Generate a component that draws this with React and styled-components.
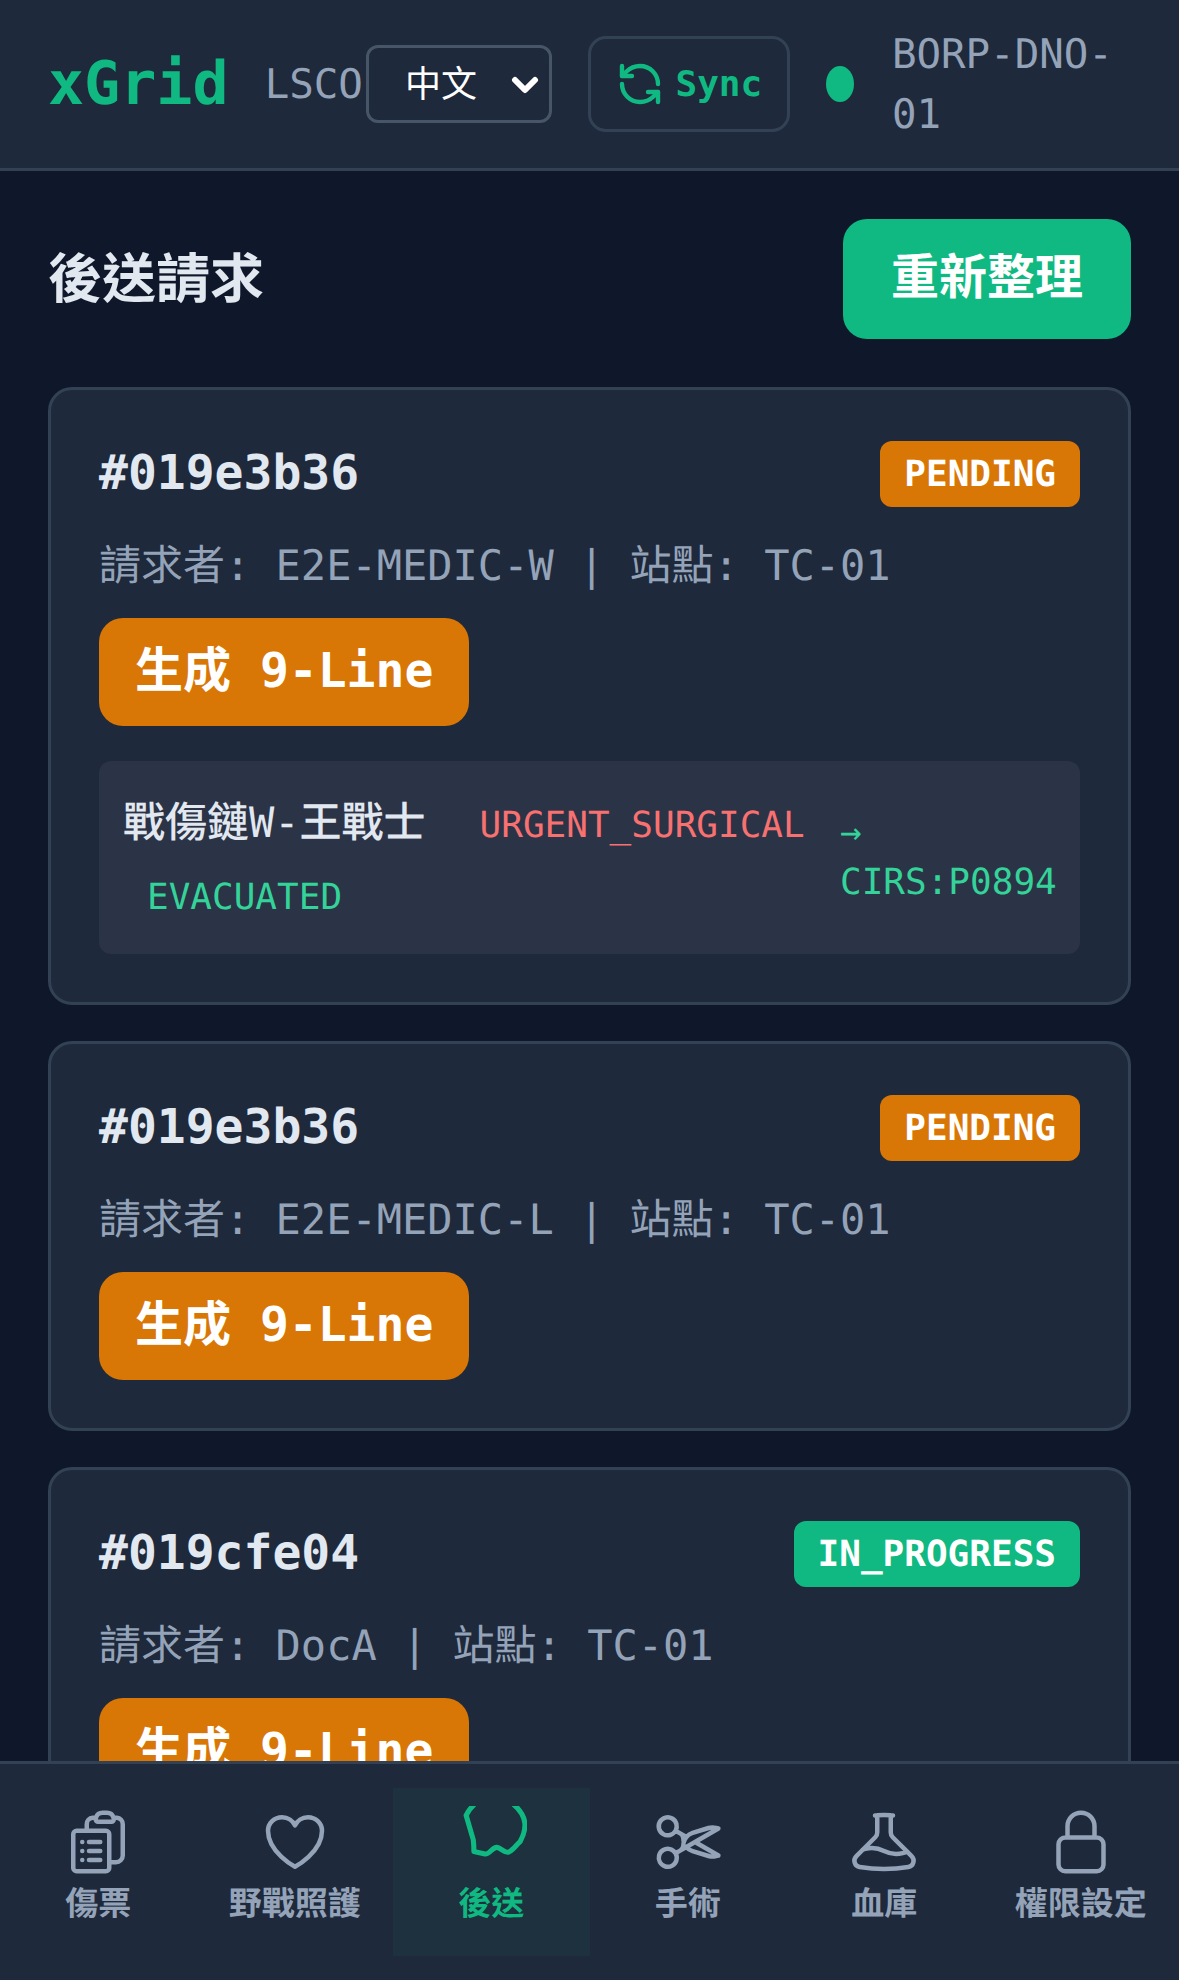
import React from 'react'
import styled, { createGlobalStyle } from 'styled-components'
import { RefreshCcw } from 'lucide-react'
import {
  HiOutlineClipboardDocumentList,
  HiOutlineHeart,
  HiOutlineScissors,
  HiOutlineBeaker,
  HiOutlineLockClosed,
} from 'react-icons/hi2'

const GlobalStyle = createGlobalStyle`
  * { box-sizing: border-box; }
  html, body { margin: 0; padding: 0; height: 100%; background: #0f172a; }
  body {
    font-family: "DejaVu Sans Mono", "Noto Sans CJK TC", monospace;
    text-rendering: geometricPrecision;
  }
`

const Page = styled.div`
  height: 1980px;
  display: flex;
  flex-direction: column;
  overflow: hidden;
  background: #0f172a;
`

const Header = styled.header`
  height: 171px;
  flex-shrink: 0;
  display: flex;
  align-items: center;
  padding: 0 48px;
  background: #1e293b;
  border-bottom: 3px solid #334155;
`

const Logo = styled.div`
  font-size: 60px;
  font-weight: 700;
  color: #10b981;
  margin-right: 36px;
`

const Station = styled.div`
  font-size: 40.8px;
  color: #94a3b8;
  margin-right: 3px;
`

const SelectWrap = styled.div`
  position: relative;
  flex-shrink: 0;
  margin-right: 36px;
`

const LangSelect = styled.select`
  display: block;
  appearance: none;
  width: 186px;
  height: 78px;
  padding: 0 36px;
  font-family: inherit;
  font-size: 36px;
  color: #fff;
  background: #1e293b;
  border: 3px solid #475569;
  border-radius: 12px;
`

const Chevron = styled.svg`
  position: absolute;
  right: 13px;
  top: 30px;
  pointer-events: none;
`

const SyncButton = styled.button`
  width: 202px;
  height: 96px;
  flex-shrink: 0;
  display: flex;
  align-items: center;
  justify-content: center;
  gap: 12px;
  padding-bottom: 2px;
  font-family: inherit;
  font-size: 36px;
  font-weight: 700;
  color: #10b981;
  background: transparent;
  border: 3px solid #334155;
  border-radius: 18px;
  margin-right: 36px;
`

const Dot = styled.span`
  width: 28px;
  height: 36px;
  flex-shrink: 0;
  border-radius: 50%;
  background: #10b981;
  margin-right: 38px;
`

const NodeName = styled.div`
  width: 239px;
  font-size: 40.8px;
  line-height: 60px;
  color: #94a3b8;
`

const Main = styled.main`
  flex: 1;
  min-height: 0;
  overflow: hidden;
  padding: 48px 48px 0;
`

const TitleRow = styled.div`
  display: flex;
  align-items: center;
  justify-content: space-between;
  margin-bottom: 48px;
`

const Title = styled.h1`
  margin: 0;
  padding-bottom: 10px;
  font-size: 54px;
  font-weight: 700;
  color: #e2e8f0;
`

const RefreshButton = styled.button`
  width: 288px;
  height: 120px;
  padding: 0 0 12px;
  font-family: inherit;
  font-size: 48px;
  font-weight: 700;
  color: #fff;
  background: #10b981;
  border: none;
  border-radius: 24px;
`

const Card = styled.section`
  padding: 51px 48px 48px;
  margin-bottom: 36px;
  background: #1e293b;
  border: 3px solid #334155;
  border-radius: 24px;
`

const CardTop = styled.div`
  display: flex;
  align-items: center;
  justify-content: space-between;
  height: 66px;
`

const RequestId = styled.div`
  padding-bottom: 2px;
  font-size: 48px;
  font-weight: 700;
  color: #e2e8f0;
`

const Badge = styled.span`
  height: 66px;
  display: flex;
  align-items: center;
  padding: 0 24px;
  font-size: 36px;
  font-weight: 700;
  color: #fff;
  background: ${({ $status }) => ($status === 'PENDING' ? '#d97706' : '#10b981')};
  border-radius: 12px;
`

const Meta = styled.div`
  margin-top: 27px;
  height: 63px;
  line-height: 63px;
  font-size: 42px;
  color: #94a3b8;
  white-space: pre;
`

const NineLineButton = styled.button`
  display: block;
  margin-top: 21px;
  height: 108px;
  padding: 0 36px 12px;
  font-family: inherit;
  font-size: 48px;
  font-weight: 700;
  color: #fff;
  background: #d97706;
  border: none;
  border-radius: 24px;
  white-space: pre;
`

const Detail = styled.div`
  margin-top: 35px;
  padding: 29px 24px 20px;
  display: flex;
  align-items: center;
  justify-content: space-between;
  background: #2b3346;
  border-radius: 12px;
`

const DetailLeft = styled.div`
  width: 690px;
  flex-shrink: 0;
  font-size: 36px;
  line-height: 72px;
`

const Casualty = styled.span`
  font-size: 42px;
  line-height: 42px;
  font-weight: 500;
  color: #e2e8f0;
  margin-right: 54px;
`

const Triage = styled.span`
  line-height: 36px;
  color: #f87171;
`

const Outcome = styled.div`
  color: #34d399;
  margin-left: 24px;
`

const DetailRight = styled.div`
  width: 216px;
  flex-shrink: 0;
  margin-top: -10px;
  font-size: 36px;
  line-height: 44px;
  color: #34d399;
`

const Arrow = styled.div`
  line-height: 48px;
  padding-bottom: 4px;
`

const Nav = styled.nav`
  height: 219px;
  flex-shrink: 0;
  display: grid;
  grid-template-columns: repeat(6, 1fr);
  padding: 24px 0;
  background: #1e293b;
  border-top: 3px solid #334155;
`

const NavItem = styled.div`
  display: flex;
  flex-direction: column;
  align-items: center;
  padding-top: 18px;
  color: ${({ $active }) => ($active ? '#10b981' : '#94a3b8')};
  background: ${({ $active }) => ($active ? 'rgba(16, 185, 129, 0.06)' : 'transparent')};
  svg { display: block; width: 72px; height: 72px; }
`

const NavLabel = styled.div`
  margin-top: 6px;
  font-size: 33px;
  line-height: 40px;
  font-weight: 600;
`

const TransportIcon = () => (
  <svg viewBox="0 0 24 24" fill="none" stroke="currentColor" strokeWidth="1.7" strokeLinejoin="round" strokeLinecap="round">
    <path d="M7.5 -1.5 Q5 0.5 3.7 3.1 L6.1 11.3 Q6.3 13 6.3 15.2 L10 16 C11.5 16.2 12.4 13.8 13.9 13.8 C15.2 13.8 16.5 15.8 17.8 15.4 C19 15 20 13.5 21.7 11.9 C23 9.5 23.4 7.5 23.3 5.8 C23 3 21.5 1 19 -1" />
  </svg>
)

const requests = [
  {
    id: '#019e3b36',
    status: 'PENDING',
    meta: '請求者: E2E-MEDIC-W | 站點: TC-01',
    detail: { name: '戰傷鏈W-王戰士', triage: 'URGENT_SURGICAL', outcome: 'EVACUATED', ref: 'CIRS:P0894' },
  },
  { id: '#019e3b36', status: 'PENDING', meta: '請求者: E2E-MEDIC-L | 站點: TC-01' },
  { id: '#019cfe04', status: 'IN_PROGRESS', meta: '請求者: DocA | 站點: TC-01' },
]

const tabs = [
  { label: '傷票', icon: <HiOutlineClipboardDocumentList /> },
  { label: '野戰照護', icon: <HiOutlineHeart /> },
  { label: '後送', icon: <TransportIcon />, active: true },
  { label: '手術', icon: <HiOutlineScissors /> },
  { label: '血庫', icon: <HiOutlineBeaker /> },
  { label: '權限設定', icon: <HiOutlineLockClosed /> },
]

export default function App() {
  return (
    <Page>
      <GlobalStyle />
      <Header>
        <Logo>xGrid</Logo>
        <Station>LSCO</Station>
        <SelectWrap>
          <LangSelect defaultValue="zh">
            <option value="zh">中文</option>
            <option value="en">EN</option>
          </LangSelect>
          <Chevron width="28" height="20" viewBox="0 0 28 20" fill="none" stroke="#fff" strokeWidth="6" strokeLinecap="round" strokeLinejoin="round">
            <path d="M4 5 L14 15 L24 5" />
          </Chevron>
        </SelectWrap>
        <SyncButton>
          <RefreshCcw size={48} strokeWidth={2.2} />
          Sync
        </SyncButton>
        <Dot />
        <NodeName>BORP-DNO-01</NodeName>
      </Header>
      <Main>
        <TitleRow>
          <Title>後送請求</Title>
          <RefreshButton>重新整理</RefreshButton>
        </TitleRow>
        {requests.map((req, i) => (
          <Card key={i}>
            <CardTop>
              <RequestId>{req.id}</RequestId>
              <Badge $status={req.status}>{req.status}</Badge>
            </CardTop>
            <Meta>{req.meta}</Meta>
            <NineLineButton>生成 9-Line</NineLineButton>
            {req.detail && (
              <Detail>
                <DetailLeft>
                  <Casualty>{req.detail.name}</Casualty>
                  <Triage>{req.detail.triage}</Triage>
                  <Outcome>{req.detail.outcome}</Outcome>
                </DetailLeft>
                <DetailRight>
                  <Arrow>→</Arrow>
                  {req.detail.ref}
                </DetailRight>
              </Detail>
            )}
          </Card>
        ))}
      </Main>
      <Nav>
        {tabs.map((tab) => (
          <NavItem key={tab.label} $active={tab.active}>
            {tab.icon}
            <NavLabel>{tab.label}</NavLabel>
          </NavItem>
        ))}
      </Nav>
    </Page>
  )
}
